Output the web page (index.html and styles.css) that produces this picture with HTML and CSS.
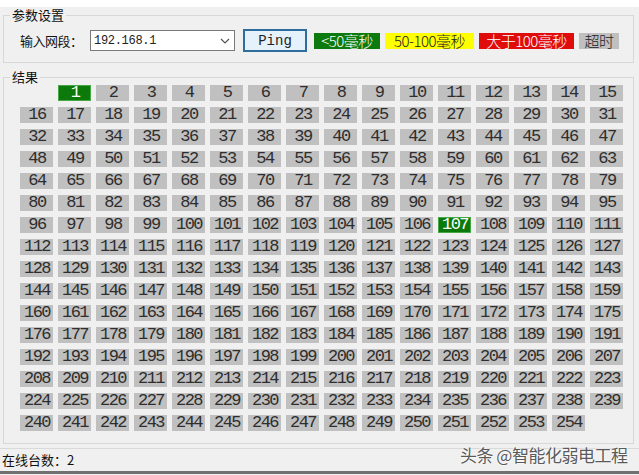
FILE: index.html
```html
<!DOCTYPE html>
<html lang="zh">
<head>
<meta charset="utf-8">
<title>Ping</title>
<link rel="stylesheet" href="styles.css">
</head>
<body>
<div class="app">
  <div class="topstrip"></div>
  <fieldset class="group group-settings">
    <legend>参数设置</legend>
    <div class="row">
      <label class="lbl">输入网段：</label>
      <div class="combo">
        <span class="combo-text">192.168.1</span>
        <svg class="chev" width="10" height="6" viewBox="0 0 10 6"><path d="M1 1 L5 5 L9 1" fill="none" stroke="#555" stroke-width="1.2"/></svg>
      </div>
      <button class="btn">Ping</button>
      <div class="legend-items">
        <span class="key key-green">&lt;50毫秒</span>
        <span class="key key-yellow">50-100毫秒</span>
        <span class="key key-red">大于100毫秒</span>
        <span class="key key-gray">超时</span>
      </div>
    </div>
  </fieldset>
  <fieldset class="group group-result">
    <legend>结果</legend>
    <div class="grid">
<i class="cell empty"></i><i class="cell ok">1</i><i class="cell">2</i><i class="cell">3</i><i class="cell">4</i><i class="cell">5</i><i class="cell">6</i><i class="cell">7</i><i class="cell">8</i><i class="cell">9</i><i class="cell">10</i><i class="cell">11</i><i class="cell">12</i><i class="cell">13</i><i class="cell">14</i><i class="cell">15</i>
<i class="cell">16</i><i class="cell">17</i><i class="cell">18</i><i class="cell">19</i><i class="cell">20</i><i class="cell">21</i><i class="cell">22</i><i class="cell">23</i><i class="cell">24</i><i class="cell">25</i><i class="cell">26</i><i class="cell">27</i><i class="cell">28</i><i class="cell">29</i><i class="cell">30</i><i class="cell">31</i>
<i class="cell">32</i><i class="cell">33</i><i class="cell">34</i><i class="cell">35</i><i class="cell">36</i><i class="cell">37</i><i class="cell">38</i><i class="cell">39</i><i class="cell">40</i><i class="cell">41</i><i class="cell">42</i><i class="cell">43</i><i class="cell">44</i><i class="cell">45</i><i class="cell">46</i><i class="cell">47</i>
<i class="cell">48</i><i class="cell">49</i><i class="cell">50</i><i class="cell">51</i><i class="cell">52</i><i class="cell">53</i><i class="cell">54</i><i class="cell">55</i><i class="cell">56</i><i class="cell">57</i><i class="cell">58</i><i class="cell">59</i><i class="cell">60</i><i class="cell">61</i><i class="cell">62</i><i class="cell">63</i>
<i class="cell">64</i><i class="cell">65</i><i class="cell">66</i><i class="cell">67</i><i class="cell">68</i><i class="cell">69</i><i class="cell">70</i><i class="cell">71</i><i class="cell">72</i><i class="cell">73</i><i class="cell">74</i><i class="cell">75</i><i class="cell">76</i><i class="cell">77</i><i class="cell">78</i><i class="cell">79</i>
<i class="cell">80</i><i class="cell">81</i><i class="cell">82</i><i class="cell">83</i><i class="cell">84</i><i class="cell">85</i><i class="cell">86</i><i class="cell">87</i><i class="cell">88</i><i class="cell">89</i><i class="cell">90</i><i class="cell">91</i><i class="cell">92</i><i class="cell">93</i><i class="cell">94</i><i class="cell">95</i>
<i class="cell">96</i><i class="cell">97</i><i class="cell">98</i><i class="cell">99</i><i class="cell">100</i><i class="cell">101</i><i class="cell">102</i><i class="cell">103</i><i class="cell">104</i><i class="cell">105</i><i class="cell">106</i><i class="cell ok">107</i><i class="cell">108</i><i class="cell">109</i><i class="cell">110</i><i class="cell">111</i>
<i class="cell">112</i><i class="cell">113</i><i class="cell">114</i><i class="cell">115</i><i class="cell">116</i><i class="cell">117</i><i class="cell">118</i><i class="cell">119</i><i class="cell">120</i><i class="cell">121</i><i class="cell">122</i><i class="cell">123</i><i class="cell">124</i><i class="cell">125</i><i class="cell">126</i><i class="cell">127</i>
<i class="cell">128</i><i class="cell">129</i><i class="cell">130</i><i class="cell">131</i><i class="cell">132</i><i class="cell">133</i><i class="cell">134</i><i class="cell">135</i><i class="cell">136</i><i class="cell">137</i><i class="cell">138</i><i class="cell">139</i><i class="cell">140</i><i class="cell">141</i><i class="cell">142</i><i class="cell">143</i>
<i class="cell">144</i><i class="cell">145</i><i class="cell">146</i><i class="cell">147</i><i class="cell">148</i><i class="cell">149</i><i class="cell">150</i><i class="cell">151</i><i class="cell">152</i><i class="cell">153</i><i class="cell">154</i><i class="cell">155</i><i class="cell">156</i><i class="cell">157</i><i class="cell">158</i><i class="cell">159</i>
<i class="cell">160</i><i class="cell">161</i><i class="cell">162</i><i class="cell">163</i><i class="cell">164</i><i class="cell">165</i><i class="cell">166</i><i class="cell">167</i><i class="cell">168</i><i class="cell">169</i><i class="cell">170</i><i class="cell">171</i><i class="cell">172</i><i class="cell">173</i><i class="cell">174</i><i class="cell">175</i>
<i class="cell">176</i><i class="cell">177</i><i class="cell">178</i><i class="cell">179</i><i class="cell">180</i><i class="cell">181</i><i class="cell">182</i><i class="cell">183</i><i class="cell">184</i><i class="cell">185</i><i class="cell">186</i><i class="cell">187</i><i class="cell">188</i><i class="cell">189</i><i class="cell">190</i><i class="cell">191</i>
<i class="cell">192</i><i class="cell">193</i><i class="cell">194</i><i class="cell">195</i><i class="cell">196</i><i class="cell">197</i><i class="cell">198</i><i class="cell">199</i><i class="cell">200</i><i class="cell">201</i><i class="cell">202</i><i class="cell">203</i><i class="cell">204</i><i class="cell">205</i><i class="cell">206</i><i class="cell">207</i>
<i class="cell">208</i><i class="cell">209</i><i class="cell">210</i><i class="cell">211</i><i class="cell">212</i><i class="cell">213</i><i class="cell">214</i><i class="cell">215</i><i class="cell">216</i><i class="cell">217</i><i class="cell">218</i><i class="cell">219</i><i class="cell">220</i><i class="cell">221</i><i class="cell">222</i><i class="cell">223</i>
<i class="cell">224</i><i class="cell">225</i><i class="cell">226</i><i class="cell">227</i><i class="cell">228</i><i class="cell">229</i><i class="cell">230</i><i class="cell">231</i><i class="cell">232</i><i class="cell">233</i><i class="cell">234</i><i class="cell">235</i><i class="cell">236</i><i class="cell">237</i><i class="cell">238</i><i class="cell">239</i>
<i class="cell">240</i><i class="cell">241</i><i class="cell">242</i><i class="cell">243</i><i class="cell">244</i><i class="cell">245</i><i class="cell">246</i><i class="cell">247</i><i class="cell">248</i><i class="cell">249</i><i class="cell">250</i><i class="cell">251</i><i class="cell">252</i><i class="cell">253</i><i class="cell">254</i><i class="cell empty"></i>
    </div>
  </fieldset>
  <div class="status">在线台数：2</div>
  <div class="bottombar"></div>
  <div class="watermark">头条 @智能化弱电工程</div>
</div>
</body>
</html>
```

FILE: styles.css
```css
* { box-sizing: border-box; }
html, body {
  margin: 0;
  padding: 0;
  background: #f0f0f0;
}
body {
  width: 639px;
  height: 475px;
  overflow: hidden;
  font-family: "Noto Sans CJK SC", "Liberation Sans", sans-serif;
  color: #111;
}
.app {
  position: relative;
  width: 639px;
  height: 475px;
  display: flex;
  flex-direction: column;
}
.topstrip {
  height: 7px;
  background: #ffffff;
  flex: none;
}
.group {
  margin: 0 5px 0 3px;
  border: 1px solid #d8d8d8;
  padding: 0 0 0 6px;
  min-width: 0;
  flex: none;
}
.group legend {
  padding: 0 2px;
  font-size: 13px;
  line-height: 16px;
  color: #111;
}
.group-settings {
  padding-top: 6px;
  padding-bottom: 10px;
}
.group-result {
  margin-top: 7px;
  padding-top: 1px;
  padding-bottom: 12px;
}
.group-result legend {
  line-height: 14px;
}
.row {
  display: flex;
  align-items: center;
  height: 23px;
  margin-left: 10px;
}
.lbl {
  width: 70px;
  font-size: 13px;
  letter-spacing: -0.5px;
  line-height: 16px;
}
.combo {
  width: 145px;
  height: 21px;
  background: #fff;
  border: 1px solid #7a7a7a;
  display: flex;
  align-items: center;
  justify-content: space-between;
  padding: 0 4px 0 3px;
  margin-right: 8px;
}
.combo-text {
  font-family: "Liberation Mono", monospace;
  font-size: 12px;
  letter-spacing: -0.3px;
  color: #222;
}
.chev { display: block; }
.btn {
  width: 64px;
  height: 23px;
  border: 2px solid #2e6d9c;
  background: #e5f1fb;
  font-family: "Liberation Mono", monospace;
  font-size: 14px;
  color: #222;
  padding: 0;
  margin-right: 7px;
}
.legend-items {
  display: flex;
  gap: 5px;
}
.key {
  height: 16px;
  line-height: 16px;
  font-size: 15px;
  text-align: center;
  white-space: nowrap;
  letter-spacing: -0.5px;
  font-weight: 300;
}
.key-green { width: 66px; background: #0c7a0c; color: #fff; }
.key-yellow { width: 89px; background: #ffff00; color: #222; }
.key-red { width: 95px; background: #e00c0c; color: #fff; }
.key-gray { width: 40px; background: #c0c0c0; color: #222; }

.grid {
  margin-left: 10px;
  display: grid;
  grid-template-columns: repeat(16, 33px);
  grid-auto-rows: 16px;
  column-gap: 5px;
  row-gap: 6px;
}
.cell {
  font-style: normal;
  background: #c0c0c0;
  font-family: "Liberation Mono", monospace;
  font-size: 17px;
  letter-spacing: -1.5px;
  line-height: 16px;
  text-align: center;
  color: #2e2e2e;
  padding-left: 1px;
}
.cell.empty { background: transparent; }
.cell.ok {
  background: #0b7a0b;
  color: #fff;
  box-shadow: inset 0 0 0 1px #45a845;
}
.status {
  margin-top: 4px;
  border-top: 1px solid #d9d9d9;
  height: 23px;
  line-height: 22px;
  font-size: 13px;
  padding-left: 2px;
  flex: none;
}
.bottombar {
  height: 3px;
  background: #707070;
  flex: none;
}
.watermark {
  position: absolute;
  left: 460px;
  top: 445px;
  font-size: 17px;
  line-height: 20px;
  color: #5a5a5a;
  letter-spacing: -0.5px;
  text-shadow: 0 0 2px #fff, 0 0 2px #fff;
  white-space: nowrap;
}
```
